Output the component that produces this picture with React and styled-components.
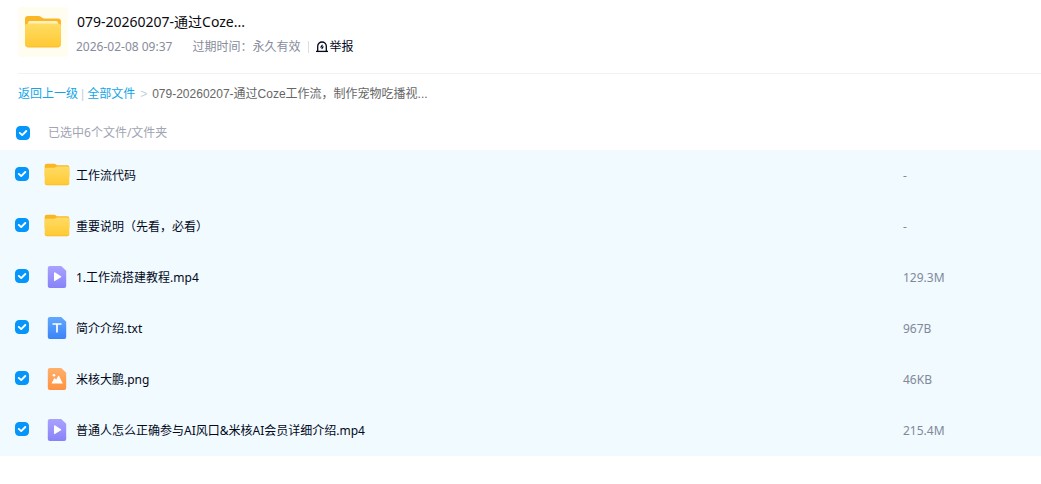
import React, { useState } from 'react';
import styled, { createGlobalStyle } from 'styled-components';

const GlobalStyle = createGlobalStyle`
  * { box-sizing: border-box; }
  body {
    margin: 0;
    background: #fff;
    color: #03081a;
    font-family: "Noto Sans", "Noto Sans CJK SC", sans-serif;
    font-size: 12px;
    line-height: 18px;
  }
`;

const Header = styled.header`
  display: flex;
  align-items: center;
  gap: 8px;
  height: 74px;
  margin-left: 18px;
  padding-bottom: 10px;
  border-bottom: 1px solid #f2f2f5;
`;

const Cover = styled.div`
  display: grid;
  place-items: center;
  width: 50px;
  height: 50px;
  border-radius: 4px;
  background: #fffdf0;
`;

const Info = styled.div`
  display: flex;
  flex-direction: column;
  gap: 4px;
  padding-top: 4px;
`;

const Title = styled.h1`
  margin: 0;
  padding-left: 1px;
  font-size: 14px;
  font-weight: 400;
  line-height: 22px;
  color: #0a0a0f;
`;

const Meta = styled.div`
  display: flex;
  align-items: center;
  height: 20px;
  color: #878c9c;
`;

const SharedAt = styled.time`
  margin-right: 20px;
`;

const ReportButton = styled.button`
  display: flex;
  align-items: center;
  gap: 1px;
  height: 12px;
  margin-left: 8px;
  padding: 0 0 0 7px;
  border: 0;
  border-left: 1px solid #dcdde3;
  background: none;
  color: #03081a;
  font: inherit;
  cursor: pointer;
`;

const Breadcrumb = styled.nav`
  display: flex;
  align-items: center;
  height: 40px;
  padding: 0 18px;
  color: #666;
  font-family: "Liberation Sans", "Noto Sans CJK SC", sans-serif;
`;

const Crumb = styled.a`
  color: #12a5e8;
  text-decoration: none;
`;

const Separator = styled.span`
  margin: 0 ${(p) => p.$space}px;
  color: #c4d0dc;
`;

const SelectionBar = styled.label`
  display: flex;
  align-items: center;
  gap: 18px;
  height: 36px;
  padding: 2px 16px 0;
  color: #a0a4b3;
`;

const CheckWrap = styled.span`
  display: inline-grid;
  vertical-align: middle;
  & > * { grid-area: 1 / 1; }
  svg { pointer-events: none; }
`;

const CheckInput = styled.input`
  appearance: none;
  width: 14px;
  height: 14px;
  margin: 0;
  border: 1px solid #c4c9d4;
  border-radius: 4px;
  background: #fff;
  cursor: pointer;
  &:checked { border-color: #0596fb; background: #0596fb; }
`;

const FileTable = styled.table`
  width: 100%;
  border-collapse: collapse;
  table-layout: fixed;
`;

const FileRow = styled.tr`
  height: 51px;
  background: ${(p) => (p.$selected ? '#f0faff' : '#fff')};
`;

const CheckCell = styled.td`
  width: 44px;
  padding: 0 0 3px 15px;
  line-height: 14px;
`;

const NameCell = styled.th`
  padding: 0;
  font-weight: 400;
  text-align: left;
`;

const SizeCell = styled.td`
  width: 138px;
  padding: 0;
  color: #818999;
`;

const FileName = styled.div`
  display: flex;
  align-items: center;
  gap: 6px;
`;

function Check({ checked, onChange, label }) {
  return (
    <CheckWrap>
      <CheckInput type="checkbox" checked={checked} onChange={onChange} aria-label={label} />
      {checked && (
        <svg width="14" height="14" viewBox="0 0 14 14" fill="none" aria-hidden="true">
          <path d="M3.800 6.900l2.400 2.200L10.300 5" stroke="#fff" strokeWidth="1.900" strokeLinecap="round" strokeLinejoin="round" />
        </svg>
      )}
    </CheckWrap>
  );
}

const IconSlot = styled.span`
  display: flex;
  justify-content: center;
  width: 26px;
  padding-bottom: 2px;
`;

function FolderIcon({ large }) {
  const id = large ? 'folder-large' : 'folder-small';
  return (
    <svg width={large ? 38 : 26} height={large ? 34 : 23} viewBox="0 0 38 34" preserveAspectRatio="none" aria-hidden="true">
      <defs>
        <linearGradient id={id} x1="0" y1="0" x2="0" y2="1">
          <stop offset="0" stopColor="#ffdc63" />
          <stop offset="1" stopColor="#ffc933" />
        </linearGradient>
      </defs>
      <path d="M1 4a3 3 0 0 1 3-3h11c2 0 3 2.500 5 2.500h14a3 3 0 0 1 3 3v14H1z" fill="#fbb624" />
      {large && <path d="M4 8a2 2 0 0 1 2-2h26a2 2 0 0 1 2 2v5H4z" fill="#fff0bd" />}
      <path d={large
        ? 'M1 11.500a3 3 0 0 1 3-3h30a3 3 0 0 1 3 3v17.500a3 3 0 0 1-3 3H4a3 3 0 0 1-3-3z'
        : 'M1 10a3 3 0 0 1 3-3h11l4-2h15a3 3 0 0 1 3 3v22a3 3 0 0 1-3 3H4a3 3 0 0 1-3-3z'} fill={`url(#${id})`} />
      <path d="M2 30.500c.6 1.200 1.200 1.500 2.500 1.500h29c1.300 0 1.900-.3 2.500-1.500" fill="none" stroke="#f9bd2a" />
    </svg>
  );
}

const documents = {
  video: {
    colors: ['#aaa2ff', '#8782f8'],
    mark: <path d="M7 6.800v7.800c0 .5.500.7.900.5l6.100-3.900c.4-.3.400-.7 0-1L7.900 6.300c-.4-.2-.9 0-.9.5z" fill="#fff" />,
  },
  text: {
    colors: ['#61a8ff', '#3c83f7'],
    mark: <path d="M5.500 7h9M10 7v8.500" stroke="#fff" strokeWidth="1.700" fill="none" />,
  },
  image: {
    colors: ['#ffb06b', '#ff9142'],
    mark: (
      <g fill="#fff">
        <circle cx="7" cy="7.200" r="1.300" />
        <path d="M4.500 15.500l2.600-5c.3-.5.800-.5 1.100 0l.9 1.300 1.900-3.600c.3-.6.900-.6 1.200 0l3.600 7.300z" />
      </g>
    ),
  },
};

function FileIcon({ kind }) {
  if (kind === 'folder') return <FolderIcon />;
  const { colors, mark } = documents[kind];
  return (
    <svg width="20" height="22" viewBox="0 0 20 22" aria-hidden="true">
      <defs>
        <linearGradient id={`doc-${kind}`} x1="0" y1="0" x2="0" y2="1">
          <stop offset="0" stopColor={colors[0]} />
          <stop offset="1" stopColor={colors[1]} />
        </linearGradient>
      </defs>
      <path d="M.8 2a2 2 0 0 1 2-2h11.400l5 4.800V20a2 2 0 0 1-2 2H2.800a2 2 0 0 1-2-2z" fill={`url(#doc-${kind})`} />
      {mark}
    </svg>
  );
}

function AlarmIcon() {
  return (
    <svg width="12" height="12" viewBox="0 0 12 12" fill="none" stroke="#03081a" aria-hidden="true">
      <path d="M1.700 10V5.300a4.300 4.300 0 0 1 8.600 0V10" strokeWidth="1.300" />
      <path d="M0 10.400h12" strokeWidth="1.300" />
      <path d="M6.500 3.800L5 6h2L5.700 8" strokeWidth="1.100" />
    </svg>
  );
}

const files = [
  { kind: 'folder', name: '工作流代码', size: '-' },
  { kind: 'folder', name: '重要说明（先看，必看）', size: '-' },
  { kind: 'video', name: '1.工作流搭建教程.mp4', size: '129.3M' },
  { kind: 'text', name: '简介介绍.txt', size: '967B' },
  { kind: 'image', name: '米核大鹏.png', size: '46KB' },
  { kind: 'video', name: '普通人怎么正确参与AI风口&米核AI会员详细介绍.mp4', size: '215.4M' },
];

export default function App() {
  const [selected, setSelected] = useState(files.map(() => true));
  const count = selected.filter(Boolean).length;
  const all = count === files.length;
  const toggle = (i) => setSelected(selected.map((s, j) => (i === j ? !s : s)));

  return (
    <main lang="zh-CN">
      <GlobalStyle />
      <Header>
        <Cover><FolderIcon large /></Cover>
        <Info>
          <Title>079-20260207-通过Coze...</Title>
          <Meta>
            <SharedAt>2026-02-08 09:37</SharedAt>
            <span>过期时间：永久有效</span>
            <ReportButton type="button"><AlarmIcon />举报</ReportButton>
          </Meta>
        </Info>
      </Header>
      <Breadcrumb>
        <Crumb href="#parent">返回上一级</Crumb>
        <Separator $space={3}>|</Separator>
        <Crumb href="#all">全部文件</Crumb>
        <Separator $space={5}>&gt;</Separator>
        <span>079-20260207-通过Coze工作流，制作宠物吃播视...</span>
      </Breadcrumb>
      <SelectionBar>
        <Check checked={all} onChange={() => setSelected(files.map(() => !all))} />
        <span>已选中{count}个文件/文件夹</span>
      </SelectionBar>
      <FileTable>
        <tbody>
          {files.map((file, i) => (
            <FileRow key={file.name} $selected={selected[i]}>
              <CheckCell><Check checked={selected[i]} onChange={() => toggle(i)} label={file.name} /></CheckCell>
              <NameCell scope="row">
                <FileName><IconSlot><FileIcon kind={file.kind} /></IconSlot>{file.name}</FileName>
              </NameCell>
              <SizeCell>{file.size}</SizeCell>
            </FileRow>
          ))}
        </tbody>
      </FileTable>
    </main>
  );
}
